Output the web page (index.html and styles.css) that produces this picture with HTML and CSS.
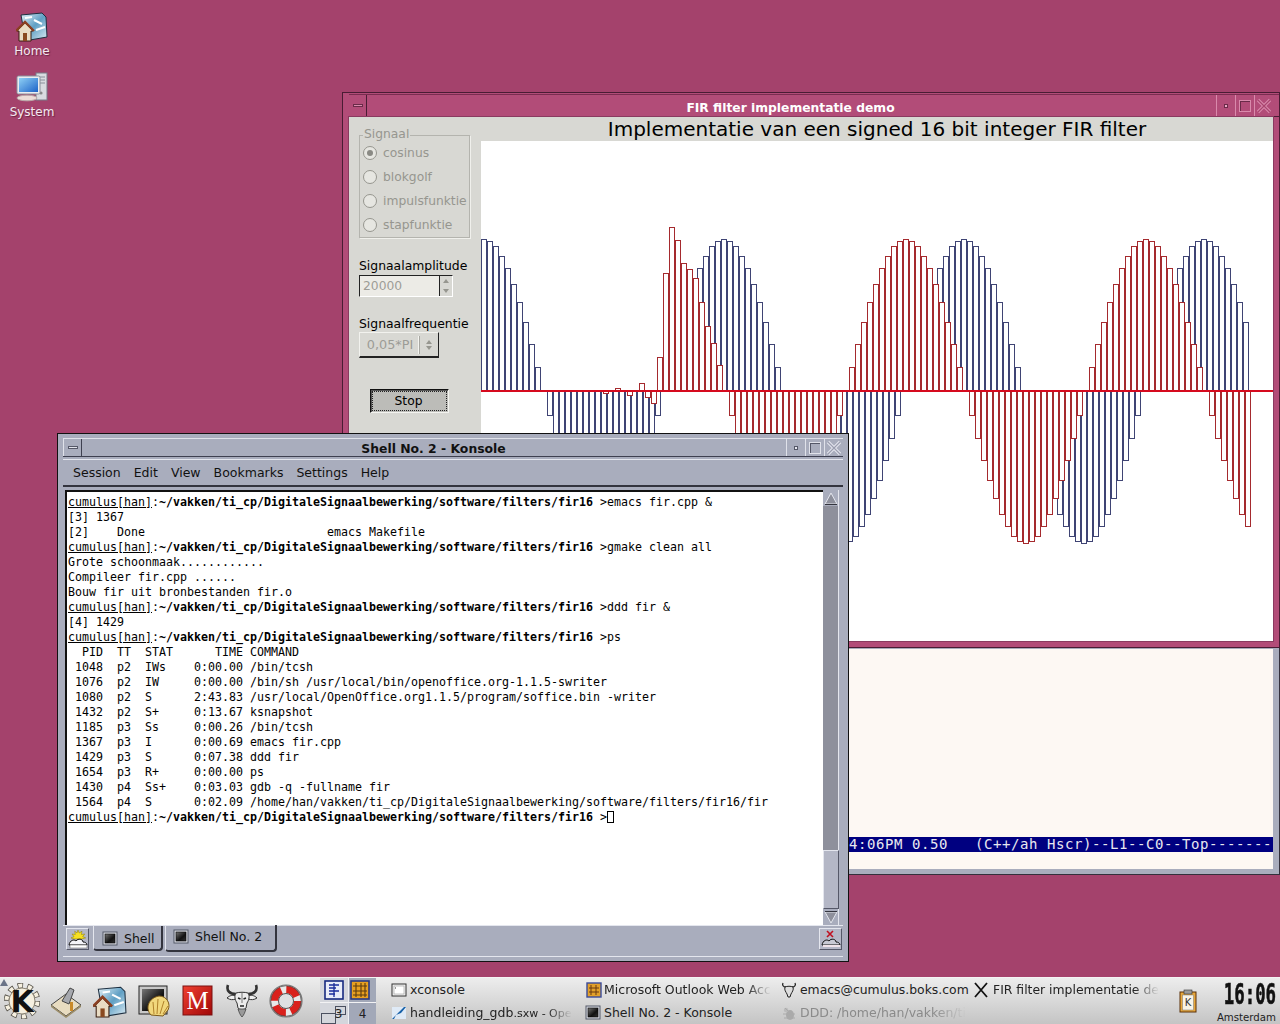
FILE: index.html
```html
<!DOCTYPE html>
<html lang="nl">
<head>
<meta charset="utf-8">
<title>KDE desktop</title>
<link rel="stylesheet" href="styles.css">
</head>
<body>
<svg class="defs" width="0" height="0">
  <defs>
    <linearGradient id="gScreen" x1="0" y1="0" x2="1" y2="1"><stop offset="0" stop-color="#8fd0f5"/><stop offset="1" stop-color="#1c63c8"/></linearGradient>
    <linearGradient id="gFolder" x1="0" y1="0" x2="1" y2="1"><stop offset="0" stop-color="#e8f4fa"/><stop offset=".5" stop-color="#5f9fc4"/><stop offset="1" stop-color="#dcecf4"/></linearGradient>
    <linearGradient id="gDark" x1="0" y1="0" x2="1" y2="1"><stop offset="0" stop-color="#777"/><stop offset=".6" stop-color="#111"/><stop offset="1" stop-color="#333"/></linearGradient>
    <linearGradient id="gRed" x1="0" y1="0" x2="1" y2="1"><stop offset="0" stop-color="#f04030"/><stop offset="1" stop-color="#a00808"/></linearGradient>
    <symbol id="iHome" viewBox="0 0 32 32">
      <path d="M5 5 L26 3 L30 7 L31 27 L14 30 L8 22 Z" fill="url(#gFolder)" stroke="#1d2f40" stroke-width="1"/>
      <path d="M9 8 L16 7 M18 10 L26 14 M20 20 L29 17" stroke="#fff" stroke-width="2" fill="none"/>
      <path d="M1 21 L9 13 L17 21 L15 21 L15 31 L3 31 L3 21 Z" fill="#e9dcc4" stroke="#3a1e10" stroke-width="1"/>
      <path d="M0 21 L9 12 L18 21" fill="none" stroke="#8a3f22" stroke-width="2.4"/>
      <rect x="7" y="23" width="4" height="8" fill="#8a4a20"/>
    </symbol>
    <symbol id="iShellTerm" viewBox="0 0 16 16">
      <rect x="1" y="1" width="14" height="13" fill="#d6d8e0" stroke="#555a68"/>
      <rect x="3" y="3" width="10" height="9" fill="url(#gDark)" stroke="#000" stroke-width=".6"/>
    </symbol>
  </defs>
</svg>

<main class="desktop">
  <div class="desk-icon desk-home">
    <svg class="di-svg" width="32" height="32"><use href="#iHome"/></svg>
    <span class="di-label">Home</span>
  </div>
  <div class="desk-icon desk-system">
    <svg class="di-svg" width="32" height="32" viewBox="0 0 32 32">
      <rect x="20" y="2" width="11" height="27" fill="#d9dbe0" stroke="#777d88"/>
      <path d="M22 6h7M22 9h7M22 12h7" stroke="#8a8f9a"/>
      <circle cx="25" cy="22" r="1.6" fill="#888"/>
      <rect x="1" y="5" width="23" height="18" rx="1.5" fill="#e9ecf0" stroke="#8b909a"/>
      <rect x="3" y="7" width="19" height="14" fill="url(#gScreen)"/>
      <ellipse cx="11" cy="27" rx="10" ry="2.8" fill="#ecdcd8" stroke="#b9a9a9"/>
    </svg>
    <span class="di-label">System</span>
  </div>

  <section class="win emacs">
    <div class="emacs-body">
      <div class="modeline">4:06PM 0.50   (C++/ah Hscr)--L1--C0--Top-------</div>
    </div>
  </section>

  <section class="win fir">
    <header class="fir-title">
      <span class="wb wb-menu"><i class="dash"></i></span>
      <span class="fir-caption">FIR filter implementatie demo</span>
      <span class="wb"><i class="dot"></i></span>
      <span class="wb"><i class="sq"></i></span>
      <span class="wb wb-x"><svg width="16" height="16" viewBox="0 0 16 16"><path d="M2 2 L14 14 M14 2 L2 14" stroke="#d98aac" stroke-width="3.2" fill="none"/><path d="M2 2 L14 14 M14 2 L2 14" stroke="#a8446e" stroke-width="1.2" fill="none"/></svg></span>
    </header>
    <div class="fir-content">
      <aside class="controls">
        <fieldset class="group">
          <legend>Signaal</legend>
          <div class="radio"><i class="rb rb-on"></i>cosinus</div>
          <div class="radio"><i class="rb"></i>blokgolf</div>
          <div class="radio"><i class="rb"></i>impulsfunktie</div>
          <div class="radio"><i class="rb"></i>stapfunktie</div>
        </fieldset>
        <div class="label lab1">Signaalamplitude</div>
        <div class="spin">
          <span class="spin-val">20000</span>
          <span class="spin-btns"><i class="up"></i><i class="down"></i></span>
        </div>
        <div class="label lab2">Signaalfrequentie</div>
        <div class="combo">
          <span class="combo-val">0,05*PI</span>
          <span class="combo-arrows"><i class="up"></i><i class="down"></i></span>
        </div>
        <div class="stop"><span>Stop</span></div>
      </aside>
      <div class="plot-col">
        <h1 class="plot-title">Implementatie van een signed 16 bit integer FIR filter</h1>
        <svg id="plot" class="plot" width="792" height="500" viewBox="0 0 792 500"></svg>
      </div>
    </div>
  </section>

  <section class="win konsole">
    <header class="k-title">
      <span class="kb kb-menu"><i class="dash"></i></span>
      <span class="k-caption">Shell No. 2 - Konsole</span>
      <span class="kb"><i class="dot"></i></span>
      <span class="kb"><i class="sq"></i></span>
      <span class="kb kb-x"><svg width="16" height="16" viewBox="0 0 16 16"><path d="M2 2 L14 14 M14 2 L2 14" stroke="#e4e6ee" stroke-width="3.2" fill="none"/><path d="M2 2 L14 14 M14 2 L2 14" stroke="#9a9dae" stroke-width="1.2" fill="none"/></svg></span>
    </header>
    <nav class="k-menu">
      <span>Session</span><span>Edit</span><span>View</span><span>Bookmarks</span><span>Settings</span><span>Help</span>
    </nav>
    <div class="k-main">
      <pre class="term"><span class="u">cumulus[han]</span>:<b>~/vakken/ti_cp/DigitaleSignaalbewerking/software/filters/fir16</b> &gt;emacs fir.cpp &amp;
[3] 1367
[2]    Done                          emacs Makefile
<span class="u">cumulus[han]</span>:<b>~/vakken/ti_cp/DigitaleSignaalbewerking/software/filters/fir16</b> &gt;gmake clean all
Grote schoonmaak............
Compileer fir.cpp ......
Bouw fir uit bronbestanden fir.o
<span class="u">cumulus[han]</span>:<b>~/vakken/ti_cp/DigitaleSignaalbewerking/software/filters/fir16</b> &gt;ddd fir &amp;
[4] 1429
<span class="u">cumulus[han]</span>:<b>~/vakken/ti_cp/DigitaleSignaalbewerking/software/filters/fir16</b> &gt;ps
  PID  TT  STAT      TIME COMMAND
 1048  p2  IWs    0:00.00 /bin/tcsh
 1076  p2  IW     0:00.00 /bin/sh /usr/local/bin/openoffice.org-1.1.5-swriter
 1080  p2  S      2:43.83 /usr/local/OpenOffice.org1.1.5/program/soffice.bin -writer
 1432  p2  S+     0:13.67 ksnapshot
 1185  p3  Ss     0:00.26 /bin/tcsh
 1367  p3  I      0:00.69 emacs fir.cpp
 1429  p3  S      0:07.38 ddd fir
 1654  p3  R+     0:00.00 ps
 1430  p4  Ss+    0:03.03 gdb -q -fullname fir
 1564  p4  S      0:02.09 /home/han/vakken/ti_cp/DigitaleSignaalbewerking/software/filters/fir16/fir
<span class="u">cumulus[han]</span>:<b>~/vakken/ti_cp/DigitaleSignaalbewerking/software/filters/fir16</b> &gt;<span class="cursor"> </span></pre>
      <div class="scroll">
        <div class="arrow"><svg width="14" height="13" viewBox="0 0 14 13"><path d="M7 1 L13 12 L1 12 Z" fill="#8e909c" stroke="#e4e6ee"/><path d="M1 12.500 H13" stroke="#33343e"/></svg></div>
        <div class="trough"></div>
        <div class="slider"></div>
        <div class="arrow"><svg width="14" height="13" viewBox="0 0 14 13"><path d="M7 12 L13 1 L1 1 Z" fill="#8e909c" stroke="#e4e6ee"/><path d="M1 .500 H13" stroke="#33343e"/></svg></div>
      </div>
    </div>
    <div class="k-tabs">
      <button class="tbtn tbtn-new">
        <svg width="20" height="20" viewBox="0 0 20 20"><path d="M10 1l1.200 3 2.800-1.800-.600 3.300 3.300-.500-2 2.700 3 1.200-4 1H6l-3-1 3-1.200-2-2.700 3.300.500L6.700 2.200 9 4z" fill="#f6e020" stroke="#8a7a00" stroke-width=".5"/><path d="M1 16 C2 11 6 10 8 12 C10 9 15 10 15 13 C17 13 19 14 19 16 Z" fill="#f4f4f8" stroke="#111"/><rect x="2" y="16" width="17" height="3" fill="#fff" stroke="#555" stroke-width=".5"/></svg>
      </button>
      <div class="tab tab-off"><svg class="tab-ico" width="16" height="16"><use href="#iShellTerm"/></svg>Shell</div>
      <div class="tab tab-on"><svg class="tab-ico" width="16" height="16"><use href="#iShellTerm"/></svg>Shell No. 2</div>
      <span class="tab-fill"></span>
      <button class="tbtn">
        <svg width="20" height="20" viewBox="0 0 20 20"><path d="M6 2 L12 8 M12 2 L6 8" stroke="#c01020" stroke-width="1.600"/><path d="M1 16 C2 11 6 10 8 12 C10 9 15 10 15 13 C17 13 19 14 19 16 Z" fill="#c8cad4" stroke="#111"/><rect x="2" y="16" width="17" height="2" fill="#f0e4ea"/></svg>
      </button>
    </div>
  </section>
</main>

<footer class="panel">
  <i class="hide-tri"></i>
  <div class="launchers">
    <span class="launch">
      <svg width="36" height="36" viewBox="0 0 36 36">
        <circle cx="18" cy="18" r="15.500" fill="none" stroke="#55524a" stroke-width="5.500" stroke-dasharray="5.500 4.240"/>
        <circle cx="18" cy="18" r="15.500" fill="none" stroke="#f6f0e0" stroke-width="4" stroke-dasharray="4 5.740" stroke-dashoffset="-.75"/>
        <circle cx="18" cy="18" r="13" fill="#f6f0e0" stroke="#8a8474"/>
        <text class="k-letter" x="18" y="29">K</text>
      </svg>
    </span>
    <span class="launch">
      <svg width="34" height="34" viewBox="0 0 34 34">
        <path d="M2 21 L17 10 L32 21 L17 32 Z" fill="#e8dcc0" stroke="#444"/>
        <path d="M13 17 L21 4 L25 6 L20 20 Z" fill="#a6a8ae" stroke="#444"/>
        <rect x="21" y="18" width="3" height="9" fill="#c98a2a"/>
        <path d="M2 21 L17 32 L32 21 L32 23 L17 34 L2 23 Z" fill="#9c8d68"/>
      </svg>
    </span>
    <span class="launch"><svg width="34" height="34"><use href="#iHome"/></svg></span>
    <span class="launch">
      <svg width="34" height="34" viewBox="0 0 34 34">
        <rect x="2" y="2" width="28" height="28" fill="#c8c8c8" stroke="#222"/>
        <rect x="5" y="5" width="22" height="22" fill="url(#gDark)"/>
        <path d="M14 31 C8 25 11 14 22 12 C30 12 34 20 31 26 L26 32 Z" fill="#f1d77c" stroke="#7d5a18"/>
        <path d="M17 30 L16 18 M20 30 L21 15 M23 30 L27 17 M26 30 L31 22" stroke="#b0812a" fill="none"/>
      </svg>
    </span>
    <span class="launch">
      <svg class="m-svg" width="32" height="32" viewBox="0 0 32 32">
        <rect x="1" y="1" width="29" height="29" fill="url(#gRed)" stroke="#7a1010"/>
        <text class="m-letter" x="15.500" y="24">M</text>
      </svg>
    </span>
    <span class="launch">
      <svg width="34" height="34" viewBox="0 0 34 34">
        <path d="M11 10 C5 10 1 7 3 1 M23 10 C29 10 33 7 31 1" fill="none" stroke="#333" stroke-width="2.600"/>
        <path d="M2 14 C5 11 8 11 11 12 L11 15 C8 16 5 16 2 14 Z M32 14 C29 11 26 11 23 12 L23 15 C26 16 29 16 32 14 Z" fill="#f0f0f0" stroke="#333"/>
        <path d="M11 9 C14 8 20 8 23 9 C25 12 24 16 22 19 L21 24 C20 26 14 26 13 24 L12 19 C10 16 9 12 11 9 Z" fill="#ececec" stroke="#333"/>
        <path d="M13 25 C14 28 15 31 17 33 C19 31 20 28 21 25 Z" fill="#9a9a9a" stroke="#333" stroke-width=".7"/>
        <path d="M13 14 L15.500 15 M21 14 L18.500 15 M15 22 L19 22" stroke="#222" stroke-width="1.400" fill="none"/>
        <path d="M17 9 L17 19" stroke="#777" fill="none"/>
      </svg>
    </span>
    <span class="launch">
      <svg width="36" height="36" viewBox="0 0 36 36">
        <circle cx="18" cy="18" r="16" fill="none" stroke="#777" stroke-width="1.200"/>
        <circle cx="18" cy="18" r="11.500" fill="none" stroke="#e8e8e8" stroke-width="7.500"/>
        <circle cx="18" cy="18" r="11.500" fill="none" stroke="#d9211c" stroke-width="7.500" stroke-dasharray="13 5.060"/>
        <circle cx="18" cy="18" r="7.500" fill="#dfe0e2" stroke="#555"/>
        <circle cx="18" cy="18" r="15.300" fill="none" stroke="#444" stroke-width=".7"/>
      </svg>
    </span>
  </div>

  <div class="pager">
    <div class="pg pg-light">
      <svg width="20" height="20" viewBox="0 0 20 20"><rect x="1" y="1" width="18" height="18" fill="#e8ecf8" stroke="#162a80" stroke-width="1.600"/><path d="M5 5h10M5 8h7M5 11h10M5 14h6M10 3v14" stroke="#1a2c9a" stroke-width="1.300"/></svg>
    </div>
    <div class="pg pg-blue pg-icon">
      <svg width="20" height="20" viewBox="0 0 20 20"><rect x="1" y="1" width="18" height="18" fill="#e8a020" stroke="#2a3a80" stroke-width="1.600"/><path d="M6 3v14M11 3v14M15 3v14M3 6h14M3 11h14M3 15h14" stroke="#5a3a10" stroke-width="1.100"/></svg>
    </div>
    <div class="pg pg-light pg-num pg-three"><i class="pw pw1"></i><i class="pw pw2"></i><span>3</span></div>
    <div class="pg pg-blue pg-num"><span>4</span></div>
  </div>

  <div class="tasks">
    <div class="task">
      <svg class="t-ico" width="16" height="16" viewBox="0 0 16 16"><rect x="1" y="2" width="14" height="12" fill="#f2f2f2" stroke="#333"/><rect x="3" y="4" width="10" height="8" fill="#fff" stroke="#888" stroke-width=".5"/><path d="M4 6h1" stroke="#333"/></svg>
      <span>xconsole</span>
    </div>
    <div class="task">
      <svg class="t-ico" width="16" height="16" viewBox="0 0 16 16"><rect x="1" y="1" width="14" height="14" fill="#e2a02a" stroke="#3a4a9a" stroke-width="1.400"/><path d="M5 3v10M10 3v10M3 6h10M3 10h10" stroke="#6a3a10"/></svg>
      <span class="fade">Microsoft Outlook Web Acc</span>
    </div>
    <div class="task">
      <svg class="t-ico" width="16" height="16" viewBox="0 0 16 16"><path d="M5 5 C2 5 1 3 2 1 M11 5 C14 5 15 3 14 1" fill="none" stroke="#222" stroke-width="1.300"/><path d="M4 5 C6 4 10 4 12 5 C13 8 11 10 10 12 L9 15 L7 15 L6 12 C5 10 3 8 4 5 Z" fill="#ddd" stroke="#222"/></svg>
      <span class="t-tight">emacs@cumulus.boks.com</span>
    </div>
    <div class="task">
      <svg class="t-ico t-x" width="14" height="16" viewBox="2 0 14 16"><path d="M1 1 L13 15 M13 1 L1 15" stroke="#111" stroke-width="1.800"/></svg>
      <span class="t-tight fade">FIR filter implementatie de</span>
    </div>
    <div class="task">
      <svg class="t-ico" width="16" height="16" viewBox="0 0 16 16"><rect x="1" y="2" width="14" height="12" fill="#dfeaf6"/><path d="M1 14 L8 7 L13 2 L15 2 L10 8 L5 10 L3 14 Z" fill="#1560a8"/></svg>
      <span class="fade">handleiding_gdb<small>.sxw - Ope</small></span>
    </div>
    <div class="task">
      <svg class="t-ico" width="16" height="16"><use href="#iShellTerm"/></svg>
      <span>Shell No. 2 - Konsole</span>
    </div>
    <div class="task task-min">
      <svg class="t-ico" width="16" height="16" viewBox="0 0 16 16"><ellipse cx="9" cy="10" rx="4" ry="5" fill="#aaa"/><circle cx="5" cy="5" r="2.200" fill="#bbb"/><path d="M2 9h12M3 13h11M4 3l3 3" stroke="#aaa"/></svg>
      <span class="fade t-ddd">DDD: /home/han/vakken/ti</span>
    </div>
  </div>

  <div class="tray">
    <svg class="klipper" width="20" height="24" viewBox="0 0 20 24"><rect x="2" y="3" width="16" height="20" fill="#e8a83c" stroke="#5a3008"/><rect x="4.500" y="6" width="11" height="15" fill="#f8f4e8" stroke="#777" stroke-width=".5"/><rect x="6" y="1" width="8" height="4" fill="#9a9a9a" stroke="#333" stroke-width=".6"/><text class="klip-k" x="10" y="17">K</text></svg>
    <div class="clock">
      <div class="clock-time">16:06</div>
      <div class="clock-zone">Amsterdam</div>
    </div>
  </div>
</footer>
<script src="chart.js"></script>
</body>
</html>
```
FILE: styles.css
```css
* { box-sizing: border-box; }
html, body { margin: 0; padding: 0; }
body {
  width: 1280px; height: 1024px; overflow: hidden;
  display: flex; flex-direction: column;
  background: #a4426c;
  font-family: "DejaVu Sans", sans-serif; font-size: 12px; color: #000;
}
.defs { position: absolute; }
.desktop { position: relative; flex: 1; min-height: 0; }

/* Desktop icons */
.desk-icon { position: absolute; width: 64px; display: flex; flex-direction: column; align-items: center; color: #fff; }
.desk-home { left: 0; top: 10px; }
.desk-system { left: 0; top: 71px; }
.di-svg { display: block; }
.di-label { margin-top: 1px; line-height: 16px; font-size: 12px; color: #f4eaf0; text-shadow: 1px 1px 1px #6a2444; }

/* Windows */
.win { position: absolute; }

.emacs { left: 849px; top: 647px; width: 431px; height: 228px; background: #a9adbd; border: 1px solid #33303c; border-left: 0; padding: 1px 6px 5px 0; }
.emacs-body { height: 100%; background: #fdf8f3; padding-top: 188px; }
.modeline {
  height: 15px; background: #000080; color: #e8e8f0; overflow: hidden; white-space: pre;
  font-family: "DejaVu Sans Mono", monospace; font-size: 14px; line-height: 15px; letter-spacing: .57px;
}

.fir {
  left: 342px; top: 92px; width: 938px; height: 556px;
  background: #b24c78; border: 1px solid #4a1c34; padding: 1px 6px 6px;
  display: flex; flex-direction: column;
}
.fir-title { height: 23px; display: flex; align-items: stretch; border-top: 1px solid #7a2c50; border-bottom: 1px solid #4a1c34; margin: 0 -6px 0 0; flex: none; }
.wb { width: 19px; display: flex; align-items: center; justify-content: center; border-left: 1px solid #d98aac; flex: none; }
.wb-menu { border-left: 0; border-right: 1px solid #4a1c34; width: 18px; }
.wb-x { margin-right: 6px; }
.fir-caption { flex: 1; text-align: center; color: #fff; font-weight: bold; font-size: 12.300px; line-height: 22px; padding: 2px 2px 0 0; white-space: nowrap; }
.dash { display: block; width: 10px; height: 3px; background: #d98aac; border: 1px solid #6a2a48; }
.dot { display: block; width: 4px; height: 4px; background: #e8a8c4; border: 1px solid #6a2a48; }
.sq { display: block; width: 12px; height: 12px; border: 1px solid #d98aac; box-shadow: inset 1px 1px 0 #6a2a48; }

.fir-content { flex: 1; display: flex; background: #d8d8d3; min-height: 0; box-shadow: 0 0 0 1px #8a3a60; }
.controls { width: 132px; flex: none; padding: 11px 0 0 10px; }
.group { margin: 0; padding: 0 0 0 3px; width: 111px; height: 110px; border: 1px solid #b4b4ae; box-shadow: 1px 1px 0 #f0f0ec; }
.group legend { padding: 0 1px; margin-left: 0; line-height: 12px; height: 14px; color: #96968f; font-size: 12.300px; }
.radio { height: 24px; display: flex; align-items: center; color: #96968f; font-size: 12.300px; white-space: nowrap; padding-bottom: 2px; }
.rb { width: 14px; height: 14px; border-radius: 50%; border: 1px solid #96968f; background: #e6e6e1; margin: 0 6px 0 0; flex: none; display: flex; align-items: center; justify-content: center; }
.rb-on::after { content: ""; width: 6px; height: 6px; border-radius: 50%; background: #8a8a84; }
.label { line-height: 16px; font-size: 12.400px; color: #000; white-space: nowrap; }
.lab1 { margin-top: 20px; }
.lab2 { margin-top: 19px; }
.spin { margin-top: 1px; width: 94px; height: 22px; display: flex; border-top: 1px solid #222; border-left: 1px solid #222; border-right: 1px solid #fff; border-bottom: 1px solid #fff; background: #ecebe6; }
.spin-val { flex: 1; color: #9c9c96; line-height: 20px; padding-left: 3px; font-size: 12.300px; }
.spin-btns { width: 13px; display: flex; flex-direction: column; border-left: 1px solid #222; background: #d8d8d3; }
.spin-btns i { flex: 1; display: flex; align-items: center; justify-content: center; }
.up::after { content: ""; border: 3.500px solid transparent; border-top: 0; border-bottom: 4px solid #96968f; }
.down::after { content: ""; border: 3.500px solid transparent; border-bottom: 0; border-top: 4px solid #96968f; }
.combo { margin-top: 0; width: 80px; height: 26px; display: flex; align-items: center; background: #d8d8d3; border: 1px solid #f2f2ee; border-right-color: #222; border-bottom: 2px solid #222; }
.combo-val { flex: none; width: 58px; text-align: center; color: #9c9c96; font-size: 12.800px; padding-left: 2px; white-space: nowrap; }
.combo-arrows { height: 18px; margin-left: 0; padding-left: 7px; border-left: 1px solid #f4f4f0; display: flex; flex-direction: column; justify-content: center; gap: 2px; box-shadow: inset 1px 0 0 #a8a8a2; }
.combo-arrows i { display: flex; height: 4px; }
.stop { margin: 31px 0 0 11px; width: 79px; height: 24px; background: #bcbcb8; border: 1px solid #111; border-right-color: #f4f4f0; border-bottom-color: #f4f4f0; padding: 1px; box-shadow: inset 1px 1px 0 #555; }
.stop span { display: block; height: 100%; border: 1px dotted #222; text-align: center; line-height: 18px; font-size: 12.300px; padding-right: 2px; }

.plot-col { flex: 1; display: flex; flex-direction: column; }
.plot-title { margin: 0; height: 24px; text-align: center; font-weight: normal; font-size: 20px; line-height: 24px; white-space: nowrap; }
.plot { display: block; background: #fff; flex: none; }
.blue { fill: none; stroke: #3f4474; stroke-width: 1; shape-rendering: crispEdges; }
.red { fill: #fff; stroke: #a52a2e; stroke-width: 1; shape-rendering: crispEdges; }
.axis { fill: #d60a1e; }

/* Konsole */
.konsole {
  left: 57px; top: 433px; width: 792px; height: 529px;
  background: #a9adbd; border: 1px solid #111; padding: 4px 5px;
  display: flex; flex-direction: column;
}
.k-title { height: 19px; flex: none; display: flex; align-items: stretch; border-top: 1px solid #e0e2ea; border-bottom: 1px solid #3e4050; }
.kb { width: 19px; display: flex; align-items: center; justify-content: center; border-left: 1px solid #e0e2ea; flex: none; }
.kb .dash { background: #e0e2ea; border-color: #555868; }
.kb .dot { background: #e8eaf2; border-color: #555868; }
.kb .sq { border-color: #e0e2ea; box-shadow: inset 1px 1px 0 #555868; }
.kb-menu { border-left: 1px solid #e0e2ea; border-right: 1px solid #3e4050; }
.k-caption { flex: 1; text-align: center; font-weight: bold; color: #111; font-size: 12.400px; line-height: 20px; padding-right: 1px; white-space: nowrap; }
.k-menu { margin-top: 2px; height: 28px; flex: none; display: flex; align-items: center; gap: 13px; padding-left: 10px; border-top: 1px solid #e4e6ee; border-bottom: 2px solid #33343e; font-size: 12.500px; color: #111; }
.k-main { margin: 3px 0 0 2px; height: 435px; flex: none; display: flex; }
.term {
  flex: 1; margin: 0; background: #fff; color: #000;
  border-top: 2px solid #111; border-left: 2px solid #111; padding: 3px 0 0 1px;
  font-family: "DejaVu Sans Mono", monospace; font-size: 11.630px; line-height: 15px; overflow: hidden;
}
.term .u { text-decoration: underline; }
.cursor { display: inline-block; width: 7px; height: 12px; border: 1px solid #000; vertical-align: -2px; }
.scroll { width: 20px; flex: none; padding: 0 4px 0 0; display: flex; flex-direction: column; background: #a9adbd; }
.arrow { height: 16px; flex: none; background: #a9adbd; display: flex; align-items: center; justify-content: center; border-right: 1px solid #e4e6ee; }
.trough { flex: 1; background: #8e909c; border-right: 1px solid #e4e6ee; }
.slider { height: 59px; flex: none; background: #b4b7c6; border: 1px solid #e4e6ee; border-right-color: #555868; border-bottom-color: #555868; }

.k-tabs { height: 32px; flex: none; display: flex; align-items: flex-start; border-top: 1px solid #e4e6ee; border-bottom: 1px solid #e4e6ee; }
.tbtn { width: 23px; height: 22px; margin: 2px 1px 0 1px; padding: 0; border: 1px solid #e4e6ee; border-right-color: #555868; border-bottom-color: #555868; background: #b4b7c6; display: flex; align-items: center; justify-content: center; }
.tbtn-new { margin-left: 3px; }
.tab { display: flex; align-items: center; white-space: nowrap; border-right: 2px solid #33343e; border-bottom: 2px solid #33343e; border-left: 1px solid #e4e6ee; border-radius: 0 0 4px 4px; font-size: 12.500px; color: #111; }
.tab-ico { margin-right: 6px; flex: none; }
.tab-off { margin: 0 0 0 3px; width: 70px; height: 25px; padding: 2px 0 0 8px; }
.tab-on { margin: -1px 0 0 2px; width: 112px; height: 27px; padding: 0 0 2px 7px; }
.tab-fill { flex: 1; }

/* Panel */
.panel {
  position: relative; height: 47px; flex: none; display: flex;
  background: linear-gradient(#ededed, #c4c4c4); border-top: 1px solid #f4f4f4;
  font-size: 12.500px; color: #222;
}
.hide-tri { position: absolute; left: 0; top: 1px; border: 4px solid transparent; border-top: 0; border-bottom: 7px solid #6b7488; }
.launchers { display: flex; width: 308px; flex: none; align-items: center; }
.launch { width: 44px; display: flex; justify-content: center; flex: none; }
.k-letter { font-family: "DejaVu Sans", sans-serif; font-weight: bold; font-size: 30px; text-anchor: middle; fill: #111; }
.m-letter { font-family: "Liberation Serif", serif; font-size: 25px; text-anchor: middle; fill: #fff; }
.pager { margin-left: 12px; width: 56px; flex: none; display: grid; grid-template-columns: 28px 28px; grid-template-rows: 24px 22px; }
.pg { position: relative; display: flex; align-items: center; justify-content: center; }
.pg-light { background: #d4d6dc; }
.pg-blue { background: #a2a8b8; border-left: 1px solid #eef0f4; }
.pg-icon { justify-content: flex-start; padding-left: 1px; }
.pg-num { border-top: 1px solid #f2f2f4; color: #222; font-size: 12px; }
.pg-num span { position: relative; }
.pg-three { padding-left: 9px; }
.pw { position: absolute; border: 1px solid #4a5060; }
.pw1 { left: 1px; top: 10px; width: 15px; height: 11px; }
.pw2 { left: 15px; top: 3px; width: 11px; height: 9px; }
.tasks { margin-left: 12px; width: 777px; flex: none; display: grid; grid-template-columns: 197px 193px 195px 192px; grid-template-rows: 23px 23px; }
.task { display: flex; align-items: center; gap: 3px; white-space: nowrap; padding-left: 3px; }
.task:nth-child(2) { gap: 2px; padding-left: 1px; }
.task:nth-child(6) { padding-left: 0; }
.t-ico { flex: none; }
.t-x { overflow: visible; }
.t-tight { font-size: 12.400px; }
.task small { font-size: 11px; }
.fade { -webkit-mask-image: linear-gradient(to right, #000 85%, transparent 100%); mask-image: linear-gradient(to right, #000 85%, transparent 100%); }
.task-min { color: #8a8a8a; }
.t-ddd { -webkit-mask-image: linear-gradient(to right, #000 80%, transparent 100%); mask-image: linear-gradient(to right, #000 80%, transparent 100%); }
.tray { flex: 1; display: flex; position: relative; }
.klipper { margin: 11px 0 0 13px; flex: none; }
.klip-k { font-family: "DejaVu Sans", sans-serif; font-size: 10px; text-anchor: middle; fill: #333; }
.clock { margin-left: 19px; width: 60px; display: flex; flex-direction: column; align-items: flex-end; }
.clock-time { margin-top: 1px; height: 32px; font-family: "DejaVu Sans Mono", monospace; font-weight: bold; font-size: 28px; line-height: 32px; color: #111; padding-right: 2px; -webkit-text-stroke: .6px #111; transform: scaleX(.62); transform-origin: right center; white-space: nowrap; }
.clock-zone { font-size: 10.200px; line-height: 13px; color: #222; padding-right: 1px; }
```
FILE: chart.js
```js
(function () {
  var svg = document.getElementById('plot');
  var NS = 'http://www.w3.org/2000/svg';
  var BASE = 250, AMP = 152, STEP = 6;

  function bar(cls, x, v) {
    v = Math.round(v);
    if (v === 0) return;
    var r = document.createElementNS(NS, 'rect');
    r.setAttribute('class', cls);
    r.setAttribute('x', x + 0.5);
    r.setAttribute('width', STEP - 1);
    if (v > 0) {
      r.setAttribute('y', BASE - v + 0.5);
      r.setAttribute('height', v);
    } else {
      r.setAttribute('y', BASE + 0.5);
      r.setAttribute('height', -v);
    }
    svg.appendChild(r);
  }

  var i, k;
  for (i = 0; i <= 127; i++) {
    bar('blue', i * STEP, AMP * Math.cos(2 * Math.PI * i / 40));
  }

  var transient = { 20: -2, 22: 3, 24: -4, 26: 8, 27: -6, 28: -12, 29: 34, 30: 118, 31: 164, 32: 151, 33: 128, 34: 122, 35: 113, 36: 89, 37: 65, 38: 48, 39: 26 };
  for (k = 20; k <= 127; k++) {
    var v = k < 40 ? (transient[k] || 0) : AMP * Math.cos(2 * Math.PI * (k - 30) / 40);
    bar('red', 2 + k * STEP, v);
  }

  var axis = document.createElementNS(NS, 'rect');
  axis.setAttribute('class', 'axis');
  axis.setAttribute('x', 0);
  axis.setAttribute('y', 249);
  axis.setAttribute('width', 792);
  axis.setAttribute('height', 2);
  svg.appendChild(axis);
})();
```
